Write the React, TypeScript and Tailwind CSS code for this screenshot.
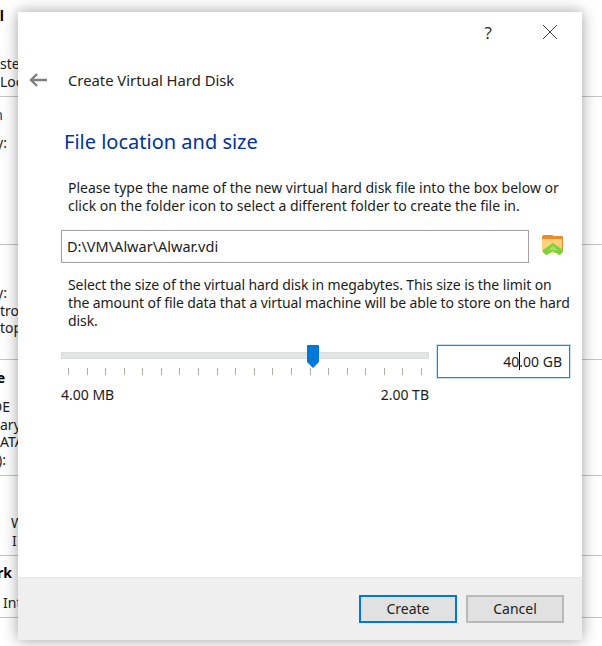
// @ts-nocheck
const sans = "font-['Noto_Sans','Open_Sans',sans-serif]";

// window behind the dialog, only its edges show
const behind = [
  { h: 97, lines: [{ t: "l", top: 7, end: 4, bold: true }, { t: "ste", top: 55, left: 0 }, { t: "Loc", top: 73, left: 0 }] },
  { h: 148, lines: [{ t: "n", top: 9, end: 3, color: "text-[#0b3a6b]" }, { t: "y:", top: 37, end: 7 }] },
  { h: 115, lines: [{ t: "y:", top: 39, end: 7 }, { t: "tro", top: 57, left: 0 }, { t: "top", top: 74, left: 0 }] },
  { h: 116, lines: [{ t: "e", top: 9, end: 5, bold: true }, { t: "DE", top: 38, end: 10 }, { t: "ary", top: 56, left: 0 }, { t: "ATA", top: 73, left: 0 }, { t: "):", top: 91, end: 6 }] },
  { h: 80, lines: [{ t: "W", top: 38, left: 11 }, { t: "I", top: 56, left: 12 }] },
  { h: 62, lines: [{ t: "rk", top: 8, end: 12, bold: true }, { t: "Int", top: 38, left: 3 }] },
];

function Ticks() {
  return (
    <div className="flex justify-between px-[7px] mt-[9px] w-[368px]">
      {Array.from({ length: 20 }).map((_, i) => (
        <div key={i} className="w-px h-[7px] bg-[#b0aca6]" />
      ))}
    </div>
  );
}

export default function App() {
  return (
    <div className={`relative w-[602px] h-[646px] bg-white overflow-hidden text-[14px] text-[#1c1c1c] ${sans}`}>
      {/* background window */}
      <div className="flex flex-col">
        {behind.map((b, i) => (
          <div key={i} className="relative border-b border-[#c4c4c4]" style={{ height: b.h }}>
            {b.lines.map((l, j) => (
              <span
                key={j}
                className={`absolute leading-[18px] ${l.bold ? "font-bold text-black" : ""} ${l.color || ""}`}
                style={l.left !== undefined ? { top: l.top, left: l.left } : { top: l.top, right: 602 - l.end }}
              >
                {l.t}
              </span>
            ))}
          </div>
        ))}
      </div>

      {/* dialog */}
      <div className="absolute left-[18px] top-[12px] w-[564px] h-[628px] bg-white flex flex-col shadow-[0_0_14px_rgba(0,0,0,0.38)]">
        <div className="flex justify-end items-center h-[40px] pr-[24px] gap-[50px] text-[#333]">
          <span className="text-[17px] leading-none">?</span>
          <svg width="16" height="16" viewBox="0 0 16 16" fill="none" stroke="#444" strokeWidth="1">
            <path d="M1 1 15 15M15 1 1 15" />
          </svg>
        </div>

        <div className="flex items-center h-[36px] mt-[10px] pl-[11px]">
          <svg width="18" height="14" viewBox="0 0 18 14" fill="none" stroke="#7f7f7f" strokeWidth="2.4">
            <path d="M18 7H2M8 1 2 7l6 6" />
          </svg>
          <span className="ml-[21px] text-[14.8px] text-[#222]">Create Virtual Hard Disk</span>
        </div>

        <div className="flex-1 flex flex-col">
          <h1 className="ml-[46px] mt-[30px] text-[20px] leading-[28px] text-[#003399]">File location and size</h1>

          <p className="ml-[50px] mt-[23px] w-[500px] leading-[18px]">
            Please type the name of the new virtual hard disk file into the box below or click on the folder icon to select a different folder to create the file in.
          </p>

          <div className="flex items-center ml-[43px] mt-[15px]">
            <div className="w-[468px] h-[33px] border border-[#a0a0a0] pl-[5px] flex items-center text-[14.5px] text-[#222]">
              D:\VM\Alwar\Alwar.vdi
            </div>
            <svg className="ml-[12px] mb-[3px]" width="23" height="22" viewBox="0 0 23 22">
              <path d="M1 3 2 1h9l2 1h8l1 1v14H2l-1-1z" fill="#f08a24" />
              <path d="M1 5h20v13l-1 1H2l-1-1z" fill="#fdd07a" />
              <path d="M12 9 22 16v2l-3 3h-1l-6-4-6 4H5l-3-3v-2z" fill="#7ed03c" />
              <path d="M12 12 17 16H7z" fill="#9ee25e" />
            </svg>
          </div>

          <p className="ml-[50px] mt-[13px] w-[505px] leading-[18px] tracking-[-0.1px]">
            Select the size of the virtual hard disk in megabytes. This size is the limit on the amount of file data that a virtual machine will be able to store on the hard disk.
          </p>

          <div className="flex ml-[43px] mt-[15px]">
            <div className="w-[368px]">
              <div className="relative h-[7px] mt-[7px] bg-[#e4e6e5] border border-[#dcdedd]">
                <svg className="absolute left-[245px] top-[-8px]" width="12" height="23" viewBox="0 0 12 23">
                  <path d="M1 0h10a1 1 0 0 1 1 1v16l-6 6-6-6V1a1 1 0 0 1 1-1z" fill="#0078d7" />
                </svg>
              </div>
              <Ticks />
              <div className="flex justify-between mt-[10px] leading-[20px]">
                <span>4.00 MB</span>
                <span>2.00 TB</span>
              </div>
            </div>
            <div className="ml-[8px] w-[133px] h-[33px] border border-[#1f86e0] shadow-[0_0_0_1px_rgba(70,150,225,0.3)] flex items-center justify-end pr-[7px]">
              <span className="relative">
                40.00 GB
                <span className="absolute left-[16px] top-[1px] w-px h-[18px] bg-black" />
              </span>
            </div>
          </div>
        </div>

        <div className="h-[63px] bg-[#efefef] border-t border-[#e6e6e6] flex justify-end gap-[9px] pt-[17px] pr-[18px]">
          <button className="w-[98px] h-[28px] pb-[2px] bg-[#e1e1e1] border-2 border-[#0078d7] text-[#222]">Create</button>
          <button className="w-[98px] h-[28px] pb-[2px] bg-[#e1e1e1] border-2 border-[#b9b9b9] text-[#222]">Cancel</button>
        </div>
      </div>
    </div>
  );
}
